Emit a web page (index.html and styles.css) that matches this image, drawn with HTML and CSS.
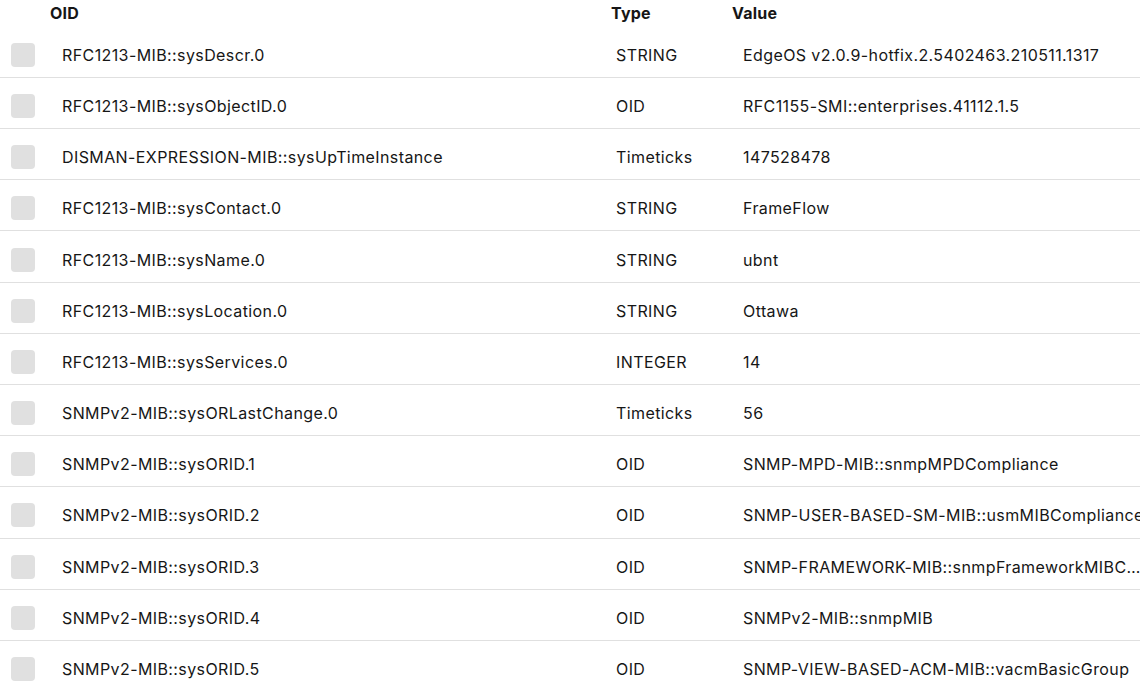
FILE: index.html
```html
<!DOCTYPE html>
<html lang="en">
<head>
<meta charset="utf-8">
<title>SNMP Walk</title>
<link rel="stylesheet" href="styles.css">
</head>
<body>
<div class="table">
  <div class="head">
    <div class="hcell hc-check"></div>
    <div class="hcell hc-oid">OID</div>
    <div class="hcell hc-type">Type</div>
    <div class="hcell hc-value">Value</div>
  </div>
  <div class="row"><div class="c-check"><span class="box"></span></div><div class="c-oid">RFC1213-MIB::sysDescr.0</div><div class="c-type">STRING</div><div class="c-value">EdgeOS v2.0.9-hotfix.2.5402463.210511.1317</div></div>
  <div class="row"><div class="c-check"><span class="box"></span></div><div class="c-oid">RFC1213-MIB::sysObjectID.0</div><div class="c-type">OID</div><div class="c-value">RFC1155-SMI::enterprises.41112.1.5</div></div>
  <div class="row"><div class="c-check"><span class="box"></span></div><div class="c-oid">DISMAN-EXPRESSION-MIB::sysUpTimeInstance</div><div class="c-type">Timeticks</div><div class="c-value">147528478</div></div>
  <div class="row"><div class="c-check"><span class="box"></span></div><div class="c-oid">RFC1213-MIB::sysContact.0</div><div class="c-type">STRING</div><div class="c-value">FrameFlow</div></div>
  <div class="row"><div class="c-check"><span class="box"></span></div><div class="c-oid">RFC1213-MIB::sysName.0</div><div class="c-type">STRING</div><div class="c-value">ubnt</div></div>
  <div class="row"><div class="c-check"><span class="box"></span></div><div class="c-oid">RFC1213-MIB::sysLocation.0</div><div class="c-type">STRING</div><div class="c-value">Ottawa</div></div>
  <div class="row"><div class="c-check"><span class="box"></span></div><div class="c-oid">RFC1213-MIB::sysServices.0</div><div class="c-type">INTEGER</div><div class="c-value">14</div></div>
  <div class="row"><div class="c-check"><span class="box"></span></div><div class="c-oid">SNMPv2-MIB::sysORLastChange.0</div><div class="c-type">Timeticks</div><div class="c-value">56</div></div>
  <div class="row"><div class="c-check"><span class="box"></span></div><div class="c-oid">SNMPv2-MIB::sysORID.1</div><div class="c-type">OID</div><div class="c-value">SNMP-MPD-MIB::snmpMPDCompliance</div></div>
  <div class="row"><div class="c-check"><span class="box"></span></div><div class="c-oid">SNMPv2-MIB::sysORID.2</div><div class="c-type">OID</div><div class="c-value">SNMP-USER-BASED-SM-MIB::usmMIBCompliance</div></div>
  <div class="row"><div class="c-check"><span class="box"></span></div><div class="c-oid">SNMPv2-MIB::sysORID.3</div><div class="c-type">OID</div><div class="c-value">SNMP-FRAMEWORK-MIB::snmpFrameworkMIBCompliance</div></div>
  <div class="row"><div class="c-check"><span class="box"></span></div><div class="c-oid">SNMPv2-MIB::sysORID.4</div><div class="c-type">OID</div><div class="c-value">SNMPv2-MIB::snmpMIB</div></div>
  <div class="row"><div class="c-check"><span class="box"></span></div><div class="c-oid">SNMPv2-MIB::sysORID.5</div><div class="c-type">OID</div><div class="c-value">SNMP-VIEW-BASED-ACM-MIB::vacmBasicGroup</div></div>
</div>
</body>
</html>
```
FILE: styles.css
```css
html, body {
  margin: 0;
  padding: 0;
  background: #ffffff;
  overflow: hidden;
}

body {
  font-family: Inter, "Open Sans", "Liberation Sans", sans-serif;
  font-size: 16px;
  letter-spacing: 0.4px;
  color: #161616;
}

.table {
  width: 1146px;
}

.head,
.row {
  display: grid;
  grid-template-columns: 48px 552px 120px minmax(0, 1fr);
}

.head {
  height: 26.8px;
  align-items: center;
  font-weight: 700;
  letter-spacing: 0.2px;
}

.hc-oid { padding-left: 2px; }
.hc-type { padding-left: 11px; }
.hc-value { padding-left: 12px; }

.row {
  height: 51.18px;
  box-sizing: border-box;
  padding-top: 6px;
  border-bottom: 1px solid #e0e0e0;
  align-items: center;
}

.c-check {
  padding-left: 11px;
  display: flex;
  align-items: center;
}

.box {
  display: block;
  width: 24px;
  height: 24px;
  border-radius: 4px;
  background: #e0e0e0;
}

.c-oid { padding-left: 14px; white-space: nowrap; }
.c-type { padding-left: 16px; white-space: nowrap; }

.c-value {
  padding-left: 23px;
  white-space: nowrap;
  overflow: hidden;
  text-overflow: ellipsis;
}
```
